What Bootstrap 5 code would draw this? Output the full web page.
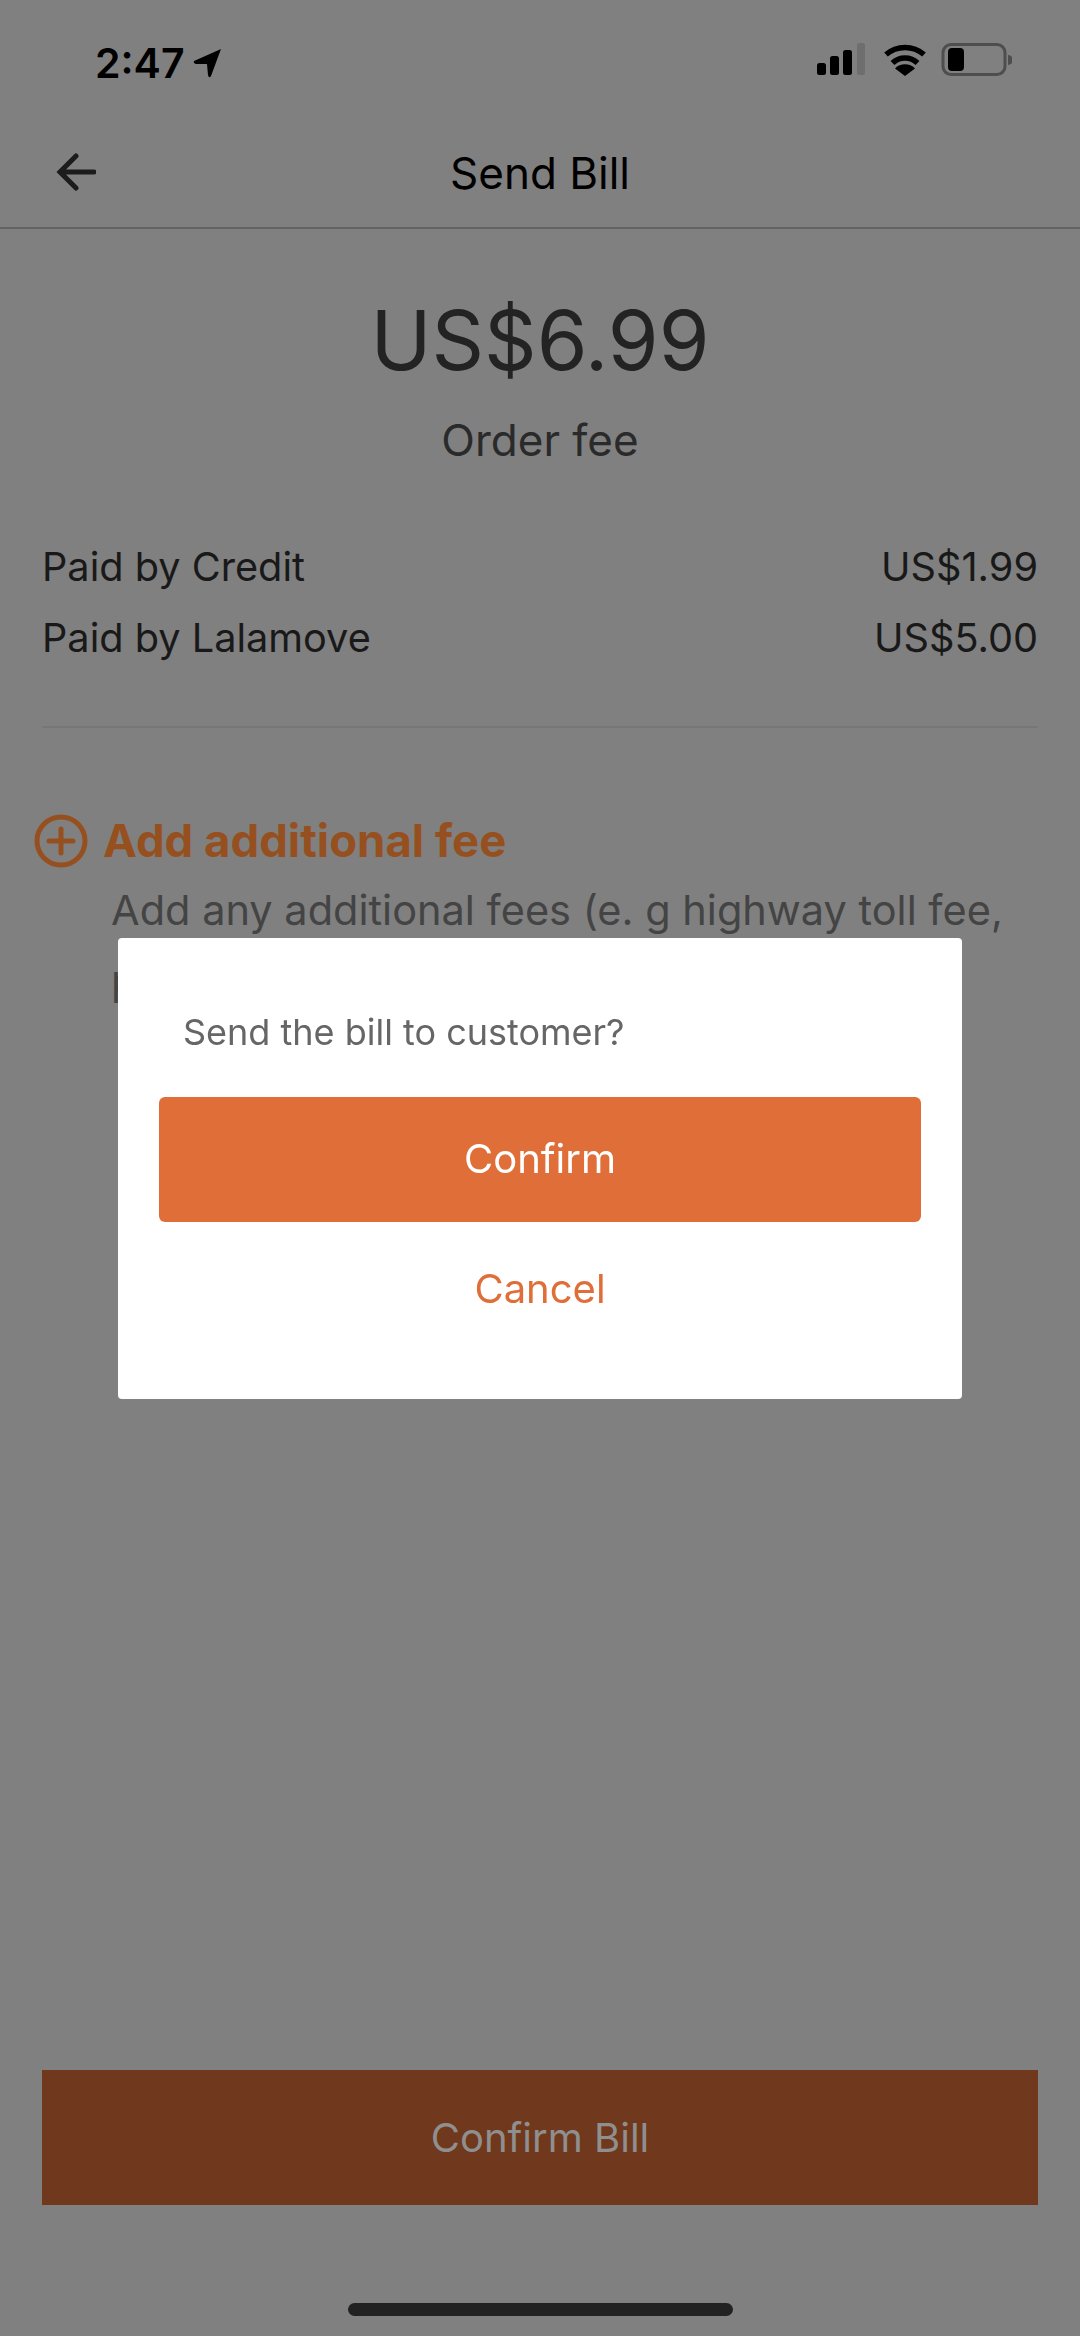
<!DOCTYPE html>
<html lang="en">
<head>
    <meta charset="UTF-8">
    <meta name="viewport" content="width=device-width, initial-scale=1.0">
    <title>Send Bill</title>
    <link href="https://cdn.jsdelivr.net/npm/bootstrap@5.3.0/dist/css/bootstrap.min.css" rel="stylesheet">
    <style>
        body {
            font-family: Inter, "Liberation Sans", sans-serif;
            background-color: #808080;
            color: #222;
            height: 2336px;
        }

        .app-screen {
            height: 2336px;
        }

        .status-row {
            height: 112px;
            padding: 43px 68px 0 95px;
            color: #000;
        }

        .status-time {
            font-size: 41px;
            font-weight: 600;
            line-height: 1;
        }

        .top-bar {
            height: 117px;
            padding-top: 7px;
            border-bottom: 2px solid #636363;
            color: #000;
        }

        .top-bar-title {
            font-size: 44px;
            line-height: 1;
        }

        .back-arrow {
            left: 56px;
            top: 41px;
        }

        .amount-text {
            font-size: 82px;
            line-height: 1;
            margin-top: 71px;
            color: #232323;
        }

        .amount-label {
            font-size: 44px;
            line-height: 1;
            margin-top: 36px;
            color: #2a2a2a;
        }

        .fee-rows {
            margin: 70px 42px 0;
            padding-bottom: 52px;
            border-bottom: 2px solid #777;
            font-size: 39.7px;
            line-height: 71px;
            color: #191919;
        }

        .extra-fee {
            margin: 0 0 0 34px;
            padding-top: 86px;
        }

        .extra-fee-title {
            font-size: 45.5px;
            font-weight: 700;
            line-height: 54px;
            color: #96501f;
        }

        .extra-fee-icon {
            margin-right: -1px;
        }

        .extra-fee-text {
            margin: 7px 60px 0 77px;
            font-size: 41.5px;
            line-height: 70px;
            color: #444;
        }

        .bill-btn {
            margin: 0 42px;
            height: 135px;
            background-color: #70381c;
            color: #8f8f8f;
            font-size: 40px;
            border: 0;
            border-radius: 0;
        }

        .home-bar {
            width: 385px;
            height: 13px;
            margin: 98px auto 20px;
            background-color: #222;
            border-radius: 7px;
        }

        .send-dialog {
            --bs-modal-width: 844px;
        }

        .send-dialog .modal-content {
            height: 461px;
            border: 0;
            border-radius: 4px;
            padding: 0 41px;
        }

        .send-question {
            margin: 74px 0 0 24px;
            font-size: 36px;
            line-height: 40px;
            color: #666;
        }

        .dialog-ok {
            height: 125px;
            margin-top: 45px;
            background-color: #e06e38;
            color: #fff;
            font-size: 40px;
            border: 0;
            border-radius: 6px;
        }

        .dialog-cancel {
            height: 100px;
            margin-top: 17px;
            color: #e06e38;
            font-size: 40px;
            border: 0;
        }
    </style>
</head>

<body>
    <div class="app-screen d-flex flex-column">
        <div class="status-row d-flex justify-content-between align-items-start">
            <div class="d-flex align-items-center gap-2">
                <span class="status-time">2:47</span>
                <svg width="30" height="32" viewBox="0 0 30 32"><path d="M1 13 28 1 18 28Q16 31 15 27L14 16 3 16Q0 15 1 13Z" fill="#000"/></svg>
            </div>
            <svg width="195" height="34" viewBox="0 0 195 34">
                <rect x="0" y="20" width="9" height="12" rx="2.5" fill="#000"/>
                <rect x="13" y="13" width="9" height="19" rx="2.5" fill="#000"/>
                <rect x="26" y="7" width="9" height="25" rx="2.5" fill="#000"/>
                <rect x="40" y="0" width="8" height="32" rx="2" fill="#6e6e6e"/>
                <path d="M69 11.500a29 29 0 0 1 38 0M75.500 20a18 18 0 0 1 25 0" fill="none" stroke="#000" stroke-width="5.500"/>
                <path d="M88 33 78 25.500a14 14 0 0 1 20 0Z" fill="#000"/>
                <rect x="126" y="1.500" width="62" height="30" rx="8" fill="none" stroke="#4e4e4e" stroke-width="3"/>
                <rect x="131" y="5" width="16" height="23" rx="4" fill="#000"/>
                <path d="M191 12a5 5 0 0 1 0 10Z" fill="#4e4e4e"/>
            </svg>
        </div>

        <div class="top-bar position-relative d-flex align-items-center justify-content-center">
            <svg class="back-arrow position-absolute" width="40" height="38" viewBox="0 0 40 38"><path d="M38 19H4M20 3 4 19 20 35" fill="none" stroke="#1c1c1c" stroke-width="5" stroke-linecap="round"/></svg>
            <span class="top-bar-title">Send Bill</span>
        </div>

        <div class="text-center amount-text">US$6.99</div>
        <div class="text-center amount-label">Order fee</div>

        <div class="fee-rows">
            <div class="d-flex justify-content-between"><span>Paid by Credit</span><span>US$1.99</span></div>
            <div class="d-flex justify-content-between"><span>Paid by Lalamove</span><span>US$5.00</span></div>
        </div>

        <div class="extra-fee">
            <div class="d-flex align-items-center gap-3 extra-fee-title">
                <svg class="extra-fee-icon" width="54" height="54" viewBox="0 0 54 54"><circle cx="27" cy="27" r="24" fill="none" stroke="#96501f" stroke-width="5"/><path d="M27 15V39M15 27H39" stroke="#96501f" stroke-width="5" stroke-linecap="round"/></svg>
                <span>Add additional fee</span>
            </div>
            <p class="extra-fee-text">Add any additional fees (e. g highway toll fee, parking fee) here</p>
        </div>

        <button class="btn bill-btn mt-auto" type="button">Confirm Bill</button>
        <div class="home-bar"></div>
    </div>

    <div class="modal d-block send-dialog" tabindex="-1">
        <div class="modal-dialog modal-dialog-centered">
            <div class="modal-content">
                <p class="send-question">Send the bill to customer?</p>
                <button class="btn dialog-ok" type="button">Confirm</button>
                <button class="btn dialog-cancel" type="button">Cancel</button>
            </div>
        </div>
    </div>

    <script src="https://cdn.jsdelivr.net/npm/bootstrap@5.3.0/dist/js/bootstrap.bundle.min.js"></script>
</body>
</html>
